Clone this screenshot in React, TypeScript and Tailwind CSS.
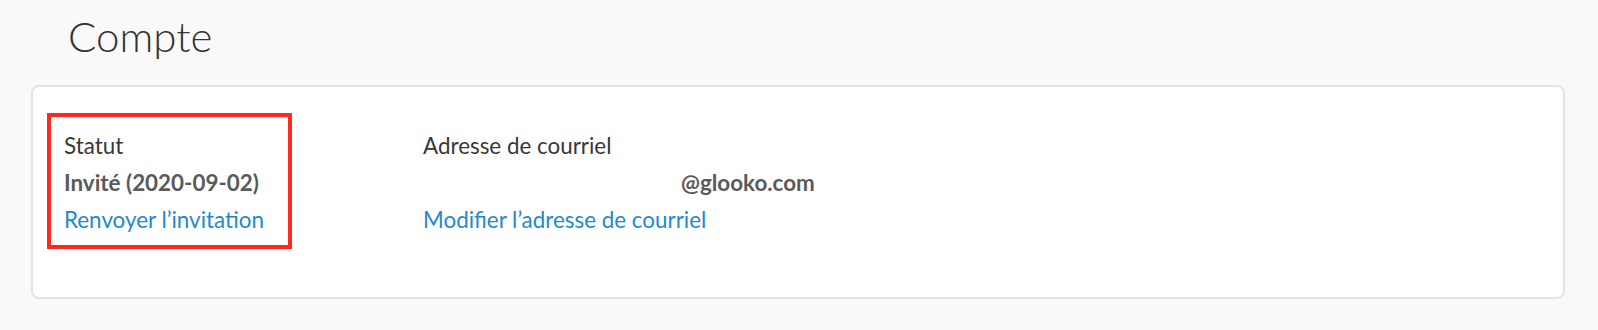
import React from "react";

export default function App() {
  return (
    <div className="w-full h-[330px] bg-[#f9f9f9] pt-[10px] pl-[31px] pr-[33px] font-['Lato','Noto_Sans',sans-serif]">
      <h1 className="ml-[37px] text-[42px] leading-[52px] font-light text-[#333333]">Compte</h1>

      <div className="mt-[23px] h-[214px] bg-white border-2 border-[#e3e3e3] rounded-[8px] pt-[26px] pl-[14px] flex items-start">
        {/* status column (highlighted) */}
        <div className="w-[245px] border-4 border-[#ff2a1f] pt-[10px] pb-[7px] pl-[13px] text-[22.4px] leading-[37px]">
          <div className="text-[#383838]">Statut</div>
          <div className="font-bold text-[#5a5a5a]">Invité (2020-09-02)</div>
          <a href="#" className="text-[#2389cf]">Renvoyer l’invitation</a>
        </div>

        {/* email column */}
        <div className="ml-[131px] pt-[14px] text-[22.4px] leading-[37px]">
          <div className="text-[#383838]">Adresse de courriel</div>
          <div className="font-bold text-[#5a5a5a] pl-[258px]">@glooko.com</div>
          <a href="#" className="text-[#2389cf]">Modifier l’adresse de courriel</a>
        </div>
      </div>
    </div>
  );
}
